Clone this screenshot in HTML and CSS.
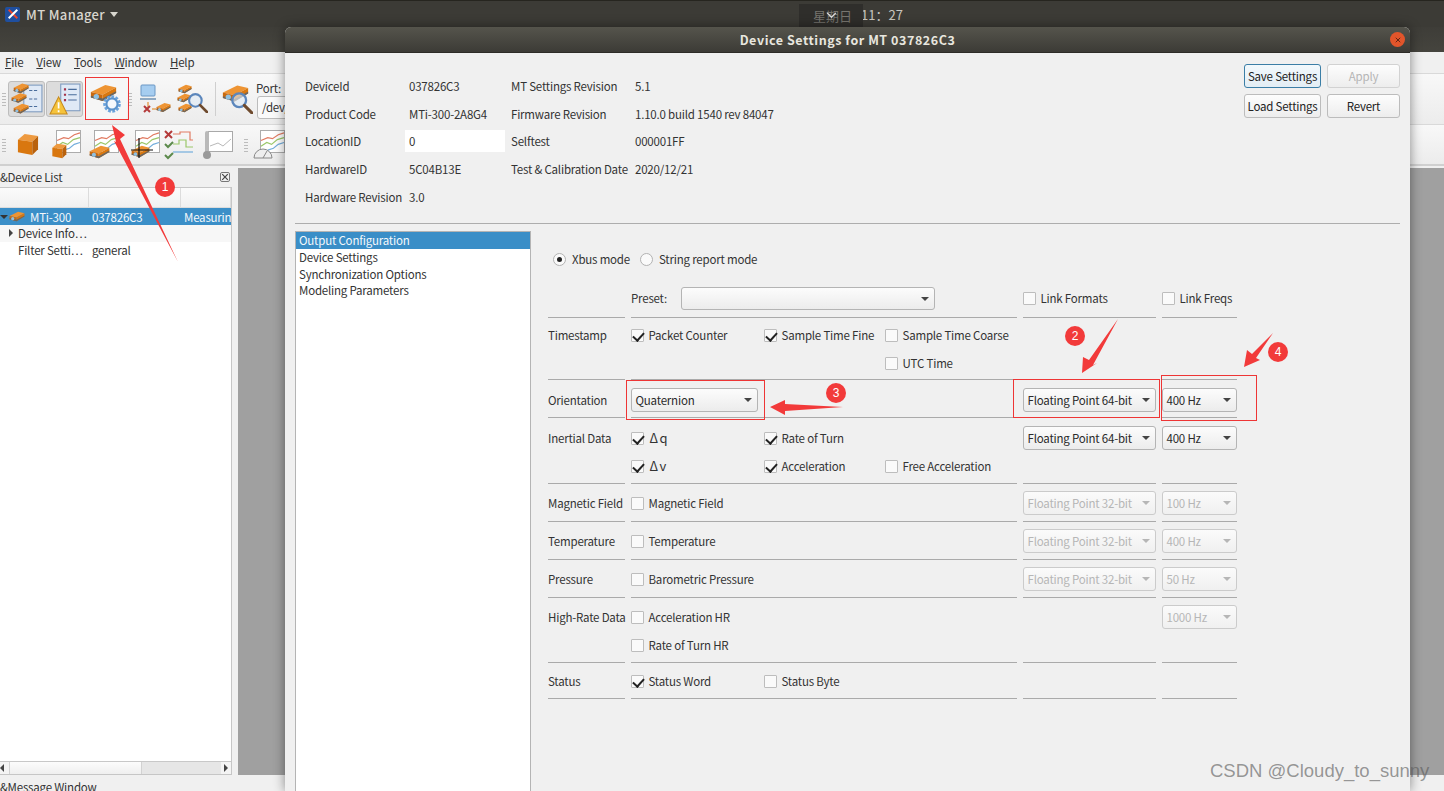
FILE: index.html
```html
<!DOCTYPE html>
<html lang="en">
<head>
<meta charset="utf-8">
<title>MT Manager</title>
<link rel="stylesheet" href="styles.css">
</head>
<body>
<svg class="defs" width="0" height="0" aria-hidden="true">
  <defs>
    <symbol id="dev" viewBox="0 0 30 20">
      <path d="M1 9 L17 1 L29 4 L14 12Z" fill="#ee9433"/>
      <path d="M1 9 L14 12 L14 19 L1 15Z" fill="#c9690f"/>
      <path d="M14 12 L29 4 L29 10 L14 19Z" fill="#d9770f"/>
      <path d="M1 13 L14 16 L29 8 L29 10 L14 19 L1 15Z" fill="#6a6660"/>
      <circle cx="7" cy="14" r="3" fill="#8fc0e0"/>
    </symbol>
    <symbol id="lens" viewBox="0 0 20 20">
      <circle cx="8" cy="8" r="6" fill="#dfeaf5" fill-opacity=".65" stroke="#5b86bc" stroke-width="2"/>
      <path d="M12.500 12.500 L19 19" stroke="#6e4a2d" stroke-width="2.600" stroke-linecap="round"/>
    </symbol>
    <symbol id="chart" viewBox="0 0 26 24">
      <rect x=".5" y=".5" width="25" height="23" fill="#fff" stroke="#a9a9a9"/>
      <path d="M1 11 L8 8 L13 9 L19 5 L25 3" fill="none" stroke="#e17b62" stroke-width="1.200"/>
      <path d="M1 17 L7 13 L12 15 L18 10 L25 8" fill="none" stroke="#9bc76a" stroke-width="1.200"/>
      <path d="M8 21 L14 19 L19 15 L25 13" fill="none" stroke="#74aedc" stroke-width="1.200"/>
    </symbol>
    <symbol id="cube" viewBox="0 0 24 24">
      <path d="M2 7 L9 1 L23 3 L17 9Z" fill="#ee9a40"/>
      <path d="M2 7 L17 9 L17 23 L2 20Z" fill="#d9770f"/>
      <path d="M17 9 L23 3 L23 17 L17 23Z" fill="#b9620d"/>
    </symbol>
  </defs>
</svg>

<div class="app">
  <header class="panel">
    <div class="appname">
      <span class="xlogo"><svg viewBox="0 0 14 14" width="12" height="12"><path d="M2 2 L12 12" stroke="#e8452e" stroke-width="2.400"/><path d="M12 2 L2 12" stroke="#fff" stroke-width="2.400"/></svg></span>
      <span>MT Manager</span>
      <span class="panel-caret"></span>
    </div>
    <div class="clock">
      <span class="clockbox">星期日<svg class="chev" viewBox="0 0 12 8" width="11" height="7"><path d="M1 1 L6 6 L11 1" fill="none" stroke="#ddd" stroke-width="1.500"/></svg></span>
      <span class="time">11：27</span>
    </div>
  </header>
  <div class="wintitle"></div>

  <nav class="menubar">
    <span><u>F</u>ile</span><span><u>V</u>iew</span><span><u>T</u>ools</span><span><u>W</u>indow</span><span><u>H</u>elp</span>
  </nav>

  <div class="toolbar tb1">
    <span class="grip"></span>
    <button class="tool on">
      <svg width="32" height="32" viewBox="0 0 30 30">
        <rect x="12" y="2" width="17" height="25" fill="#dfe9f6" stroke="#7f9cc0"/>
        <path d="M17 7h9M17 15h9M17 22h9" stroke="#4a6d9c" stroke-dasharray="3 1.500"/>
        <use href="#dev" x="2" y="0" width="15" height="10"/><use href="#dev" x="0" y="9" width="15" height="10"/><use href="#dev" x="2" y="19" width="15" height="10"/>
      </svg>
    </button>
    <button class="tool on">
      <svg width="32" height="32" viewBox="0 0 30 30">
        <rect x="11" y="1" width="18" height="25" fill="#dfe9f6" stroke="#7f9cc0"/>
        <path d="M18 6h8M18 11h8M18 16h8" stroke="#4a6d9c"/><path d="M14 6h2M14 11h2M14 16h2" stroke="#a3324a" stroke-width="2"/>
        <path d="M9 13 L17 29 L1 29Z" fill="#f5c33b" stroke="#c68a1d"/><path d="M9 18v6M9 25.500v2" stroke="#fff" stroke-width="1.600"/>
      </svg>
    </button>
    <button class="tool gear">
      <svg width="32" height="30" viewBox="0 0 32 30">
        <use href="#dev" x="0" y="0" width="27" height="18"/>
        <circle cx="22" cy="20" r="7.500" fill="none" stroke="#6ba3dc" stroke-width="2.600" stroke-dasharray="2.800 1.500"/>
        <circle cx="22" cy="20" r="5.600" fill="#f4f8fc" stroke="#5b93cc" stroke-width="2.200"/>
      </svg>
    </button>
    <span class="grip g2"></span>
    <span class="ico i4">
      <svg width="32" height="30" viewBox="0 0 32 30">
        <rect x="2" y="1" width="14" height="11" rx="1" fill="#a6cdf0" stroke="#6b97c4"/><path d="M1 14h16v2H1z" fill="#8fa9c2"/>
        <path d="M9 18v5" stroke="#e9b77f" stroke-width="2"/><path d="M5 22l6 6M11 22l-6 6" stroke="#b43a3a" stroke-width="2"/>
        <path d="M13 25h4" stroke="#e9b77f" stroke-width="2"/><use href="#dev" x="17" y="18" width="15" height="11"/>
      </svg>
    </span>
    <span class="ico i5">
      <svg width="31" height="30" viewBox="0 0 31 30">
        <use href="#dev" x="1" y="0" width="14" height="10"/><use href="#dev" x="0" y="9" width="14" height="10"/><use href="#dev" x="1" y="19" width="14" height="10"/>
        <use href="#lens" x="10" y="8" width="21" height="21"/>
      </svg>
    </span>
    <span class="sep"></span>
    <span class="ico i6">
      <svg width="31" height="30" viewBox="0 0 31 30">
        <use href="#dev" x="0" y="0" width="27" height="19"/><use href="#lens" x="8" y="7" width="23" height="23"/>
      </svg>
    </span>
    <div class="port">
      <span>Port:</span>
      <span class="portbox">/dev/ttyUSB0</span>
    </div>
  </div>

  <div class="toolbar tb2">
    <span class="grip"></span>
    <svg class="t cube1" width="23" height="23"><use href="#cube" width="23" height="23"/></svg>
    <svg class="t ch2" width="30" height="30"><use href="#chart" x="5" y="0" width="25" height="23"/><use href="#cube" x="0" y="13" width="16" height="16"/></svg>
    <svg class="t ch3" width="30" height="30"><use href="#chart" x="5" y="0" width="25" height="23"/><use href="#dev" x="0" y="15" width="21" height="14"/></svg>
    <svg class="t ch4" width="30" height="30"><use href="#chart" x="5" y="0" width="25" height="23"/><use href="#dev" x="1" y="15" width="19" height="13"/><path d="M9 8V28M1 20H23" stroke="#111" stroke-width="1.200"/></svg>
    <svg class="t ch5" width="30" height="30" viewBox="0 0 30 30">
      <path d="M9 4H16V2H26V10H29" fill="none" stroke="#e17b62" stroke-width="1.200"/><path d="M9 14H15V10H22V17H29" fill="none" stroke="#9bc76a" stroke-width="1.200"/><path d="M9 22H29" fill="none" stroke="#74aedc" stroke-width="1.200"/>
      <path d="M1 1l7 7M8 1l-7 7" stroke="#b43a3a" stroke-width="2"/><path d="M1 14l3 3 5-5M1 25l3 3 5-5" fill="none" stroke="#5c8a4c" stroke-width="2"/>
    </svg>
    <svg class="t ch6" width="30" height="30" viewBox="0 0 30 30">
      <rect x="5.500" y="1.500" width="24" height="20" fill="#fff" stroke="#a9a9a9"/><path d="M7 16l8-3 5 3 8-7" fill="none" stroke="#b8b8b8"/>
      <rect x="2" y="1" width="4" height="23" rx="2" fill="#b9b9b9"/><circle cx="4" cy="25" r="4" fill="#9a9a9a"/>
    </svg>
    <span class="grip g3"></span>
    <svg class="t ch7" width="33" height="30" viewBox="0 0 33 30">
      <use href="#chart" x="8" y="0" width="25" height="23"/><path d="M2 28a9 9 0 0 1 18 0Z" fill="#eee" stroke="#888"/><path d="M11 28l4-7" stroke="#888"/>
    </svg>
  </div>

  <div class="workspace">
    <aside class="dock">
      <div class="dockhead"><span>&amp;Device List</span><span class="dockclose"><svg viewBox="0 0 10 10" width="8" height="8"><path d="M1.500 1.500l7 7M8.500 1.500l-7 7" stroke="#444" stroke-width="1.500"/></svg></span></div>
      <div class="tree">
        <div class="treehead"><span></span><span></span><span></span></div>
        <div class="tr sel"><span class="c1"><i class="tw down"></i><svg width="16" height="13"><use href="#dev" width="16" height="13"/></svg>MTi-300</span><span class="c2">037826C3</span><span class="c3">Measuring</span></div>
        <div class="tr alt"><span class="c1 sub"><i class="tw"></i>Device Info…</span><span class="c2"></span></div>
        <div class="tr"><span class="c1 sub">Filter Setti…</span><span class="c2">general</span></div>
        <div class="fill"></div>
        <div class="hscroll"><span class="sa l"></span><span class="thumb"></span><span class="rest"></span><span class="sa r"></span></div>
      </div>
      <div class="msg">&amp;Message Window</div>
    </aside>
    <main class="mdi"></main>
  </div>
</div>

<section class="dialog">
  <div class="dtitle">
    <span>Device Settings for MT 037826C3</span>
    <span class="dclose"><svg viewBox="0 0 8 8" width="6" height="6"><path d="M1 1l6 6M7 1l-6 6" stroke="#5c2412" stroke-width="1.300"/></svg></span>
  </div>
  <div class="dbody">
    <div class="dtop">
      <div class="info">
        <span>DeviceId</span><span>037826C3</span><span>MT Settings Revision</span><span>5.1</span>
        <span>Product Code</span><span>MTi-300-2A8G4</span><span>Firmware Revision</span><span>1.10.0 build 1540 rev 84047</span>
        <span>LocationID</span><span class="inp">0</span><span>Selftest</span><span>000001FF</span>
        <span>HardwareID</span><span>5C04B13E</span><span>Test &amp; Calibration Date</span><span>2020/12/21</span>
        <span>Hardware Revision</span><span>3.0</span><span></span><span></span>
      </div>
      <div class="btns">
        <button class="btn focus">Save Settings</button><button class="btn off">Apply</button>
        <button class="btn">Load Settings</button><button class="btn">Revert</button>
      </div>
    </div>
    <div class="hr"></div>
    <div class="dmain">
      <div class="pages">
        <div class="page cur">Output Configuration</div>
        <div class="page">Device Settings</div>
        <div class="page">Synchronization Options</div>
        <div class="page">Modeling Parameters</div>
      </div>
      <div class="config">
        <div class="modes">
          <span class="radio on"></span><span class="mtext">Xbus mode</span>
          <span class="radio"></span><span>String report mode</span>
        </div>

        <div class="row preset">
          <div class="cell"></div>
          <div class="cell presetcell"><span class="plabel">Preset:</span><span class="combo pcombo"></span></div>
          <div class="cell"><div class="line"><span class="ck"></span>Link Formats</div></div>
          <div class="cell"><div class="line"><span class="ck"></span>Link Freqs</div></div>
        </div>

        <div class="row ts">
          <div class="cell"><div class="line">Timestamp</div></div>
          <div class="cell checks">
            <div class="line"><span class="ck y"></span>Packet Counter</div>
            <div class="line"><span class="ck y"></span>Sample Time Fine</div>
            <div class="line"><span class="ck"></span>Sample Time Coarse</div>
            <div class="line c3col"><span class="ck"></span>UTC Time</div>
          </div>
          <div class="cell"></div><div class="cell"></div>
        </div>

        <div class="row or">
          <div class="cell"><div class="line">Orientation</div></div>
          <div class="cell"><div class="line"><span class="combo quat">Quaternion</span></div></div>
          <div class="cell"><div class="line"><span class="combo">Floating Point 64-bit</span></div></div>
          <div class="cell"><div class="line"><span class="combo">400 Hz</span></div></div>
        </div>

        <div class="row in">
          <div class="cell"><div class="line">Inertial Data</div></div>
          <div class="cell checks">
            <div class="line"><span class="ck y"></span><span class="delta">Δq</span></div>
            <div class="line"><span class="ck y"></span>Rate of Turn</div>
            <div class="line"></div>
            <div class="line"><span class="ck y"></span><span class="delta">Δv</span></div>
            <div class="line"><span class="ck y"></span>Acceleration</div>
            <div class="line"><span class="ck"></span>Free Acceleration</div>
          </div>
          <div class="cell"><div class="line"><span class="combo">Floating Point 64-bit</span></div></div>
          <div class="cell"><div class="line"><span class="combo">400 Hz</span></div></div>
        </div>

        <div class="row mg">
          <div class="cell"><div class="line">Magnetic Field</div></div>
          <div class="cell"><div class="line"><span class="ck"></span>Magnetic Field</div></div>
          <div class="cell"><div class="line"><span class="combo dis">Floating Point 32-bit</span></div></div>
          <div class="cell"><div class="line"><span class="combo dis">100 Hz</span></div></div>
        </div>

        <div class="row mg">
          <div class="cell"><div class="line">Temperature</div></div>
          <div class="cell"><div class="line"><span class="ck"></span>Temperature</div></div>
          <div class="cell"><div class="line"><span class="combo dis">Floating Point 32-bit</span></div></div>
          <div class="cell"><div class="line"><span class="combo dis">400 Hz</span></div></div>
        </div>

        <div class="row mg">
          <div class="cell"><div class="line">Pressure</div></div>
          <div class="cell"><div class="line"><span class="ck"></span>Barometric Pressure</div></div>
          <div class="cell"><div class="line"><span class="combo dis">Floating Point 32-bit</span></div></div>
          <div class="cell"><div class="line"><span class="combo dis">50 Hz</span></div></div>
        </div>

        <div class="row hr-data">
          <div class="cell"><div class="line">High-Rate Data</div></div>
          <div class="cell">
            <div class="line"><span class="ck"></span>Acceleration HR</div>
            <div class="line"><span class="ck"></span>Rate of Turn HR</div>
          </div>
          <div class="cell"></div>
          <div class="cell"><div class="line"><span class="combo dis">1000 Hz</span></div></div>
        </div>

        <div class="row st">
          <div class="cell"><div class="line">Status</div></div>
          <div class="cell checks">
            <div class="line"><span class="ck y"></span>Status Word</div>
            <div class="line"><span class="ck"></span>Status Byte</div>
          </div>
          <div class="cell"></div><div class="cell"></div>
        </div>
      </div>
    </div>
  </div>
</section>

<svg class="marks" width="1444" height="791" viewBox="0 0 1444 791">
  <g fill="#f23a3a">
    <path d="M112 125 L125 135 L120 139 L178 262 L114 141 L116 142Z"/>
    <path d="M1082 373 L1083 357 L1089 360 L1118 319 L1093 365 L1097 363Z"/>
    <path d="M1244 367 L1247 350 L1252 354 L1273 333 L1256 358 L1260 360Z"/>
    <path d="M770 407 L785 400 L785 404 L843 407 L785 411 L785 415Z"/>
    <circle cx="165" cy="187" r="10"/>
    <circle cx="1075" cy="336" r="10"/>
    <circle cx="836" cy="393" r="10"/>
    <circle cx="1278" cy="352" r="10"/>
  </g>
  <g class="marknum" fill="#fff" text-anchor="middle">
    <text x="165" y="191">1</text>
    <text x="1075" y="340">2</text>
    <text x="836" y="397">3</text>
    <text x="1278" y="356">4</text>
  </g>
</svg>
<div class="box b1"></div>
<div class="box b2"></div>
<div class="box b3"></div>
<div class="box b4"></div>
<div class="wm">CSDN @Cloudy_to_sunny</div>
</body>
</html>
```

FILE: styles.css
```css
* { box-sizing: border-box; }
html, body { margin: 0; height: 100%; overflow: hidden; }
body {
  font-family: "Noto Sans CJK SC", "Noto Sans", sans-serif;
  font-size: 11.500px;
  letter-spacing: -.2px;
  color: #333;
  background: #f0f0f0;
  position: relative;
}
.defs { position: absolute; }
.app { display: flex; flex-direction: column; height: 791px; }

.panel {
  height: 27px;
  background: #3c3b36;
  border-top: 1px solid #26251f;
  display: flex;
  align-items: center;
  color: #d8d6ce;
  position: relative;
  flex: none;
}
.appname { display: flex; align-items: center; gap: 6px; padding-left: 5px; font-size: 13px; font-weight: 500; letter-spacing: .35px; }
.xlogo { width: 15px; height: 15px; background: #1f4f9f; display: flex; align-items: center; justify-content: center; border-radius: 2px; }
.panel-caret { width: 0; height: 0; border: 4px solid transparent; border-top: 5px solid #d8d6ce; border-bottom: 0; margin-left: -1px; }
.clock { margin-left: 681px; display: flex; align-items: center; height: 100%; }
.clockbox {
  position: relative;
  width: 64px; height: 24px; background: #2f2e2b; color: #77756f;
  display: flex; align-items: center; padding-left: 14px; font-size: 13px;
  letter-spacing: 0; margin-top: 3px;
}
.chev { position: absolute; left: 27px; top: 8px; }
.time { font-size: 13px; color: #c9c7c0; margin-left: -2px; letter-spacing: 0; }
.wintitle { height: 25px; flex: none; background: linear-gradient(#3e3d38, #45443e); }

.menubar { height: 21px; flex: none; display: flex; align-items: center; gap: 13px; padding-left: 5px; padding-bottom: 1px; background: #f0f0f0; color: #333; }
.toolbar { flex: none; display: flex; align-items: center; background: linear-gradient(#f8f8f8, #ececec); border-top: 1px solid #d9d9d9; position: relative; }
.tb1 { height: 51px; }
.tb2 { height: 42px; border-bottom: 2px solid #d0d0d0; }
.grip { width: 4px; height: 14px; margin-left: 2px; background-image: radial-gradient(#bcbcbc 40%, transparent 45%); background-size: 2px 3px; }
.tool { width: 37px; height: 36px; border: 0; padding: 0; background: none; display: flex; align-items: center; justify-content: center; border-radius: 3px; margin-left: 1px; }
.tool.on { background: #dcdcdc; border: 1px solid #bdbdbd; }
.tool.on:first-of-type { margin-left: 2px; }
.tool.gear { width: 43px; height: 42px; margin-left: 1px; background: #f6f6f6; }
.g2 { margin-left: 1px; }
.ico { display: flex; }
.i4 { margin-left: 7px; }
.i5 { margin-left: 6px; }
.sep { width: 1px; height: 34px; background: #cfcfcf; margin: 0 6px 0 7px; }
.port { display: flex; flex-direction: column; gap: 0; margin-left: 3px; padding-top: 1px; width: 200px; }
.portbox { height: 23px; width: 200px; margin-left: 1px; border: 1px solid #bcbcbc; border-radius: 3px; background: #fafafa; padding: 2px 4px; white-space: nowrap; overflow: hidden; }
.t { flex: none; }
.cube1 { margin-left: 10px; }
.ch2 { margin-left: 12px; }
.ch3 { margin-left: 8px; }
.ch4 { margin-left: 11px; }
.ch5 { margin-left: 4px; }
.ch6 { margin-left: 9px; }
.g3 { margin-left: 11px; }
.ch7 { margin-left: 4px; }

.workspace { flex: 1; display: flex; min-height: 0; }
.dock { width: 232px; flex: none; display: flex; flex-direction: column; }
.dockhead { height: 21px; display: flex; align-items: center; justify-content: space-between; padding-right: 2px; flex: none; }
.dockclose { width: 10px; height: 10px; border: 1px solid #777; border-radius: 2px; display: flex; align-items: center; justify-content: center; }
.tree { flex: 1; display: flex; flex-direction: column; background: #fff; border: 1px solid #c6c6c6; border-left: 0; min-height: 0; }
.treehead { height: 20px; flex: none; display: grid; grid-template-columns: 89px 92px 1fr; background: linear-gradient(#fbfbfb, #f0f0f0); }
.treehead span { border-right: 1px solid #dcdcdc; border-bottom: 1px solid #dcdcdc; }
.tr { height: 16.500px; flex: none; display: grid; grid-template-columns: 89px 92px 1fr; align-items: center; line-height: 16px; white-space: nowrap; overflow: hidden; }
.tr.sel { background: #3b8fc8; color: #f4f8fb; height: 17px; }
.tr.alt { background: #f7f7f7; }
.c1 { display: flex; align-items: center; gap: 5px; overflow: hidden; }
.sel .c1 { padding-left: 9px; position: relative; }
.sub { padding-left: 18px; position: relative; }
.c2 { padding-left: 3px; }
.c3 { padding-left: 3px; overflow: hidden; }
.tw { position: absolute; left: 9px; top: 4px; width: 0; height: 0; border: 4px solid transparent; border-left: 4px solid #444; border-right: 0; }
.tw.down { left: 0; top: 6px; border: 4px solid transparent; border-top: 4px solid #333; border-bottom: 0; }
.fill { flex: 1; }
.hscroll { height: 13px; flex: none; display: flex; border-top: 1px solid #c8c8c8; background: #e6e6e6; }
.sa { width: 9px; position: relative; background: #f4f4f4; flex: none; }
.sa::after { content: ""; position: absolute; top: 2px; width: 0; height: 0; border: 4px solid transparent; }
.sa.l::after { left: 0; border-right: 4px solid #444; border-left: 0; }
.sa.r { width: 10px; }
.sa.r::after { left: 3px; border-left: 4px solid #444; border-right: 0; }
.thumb { width: 133px; background: linear-gradient(#fcfcfc, #efefef); border: 1px solid #d2d2d2; border-width: 0 1px; }
.rest { flex: 1; }
.msg { height: 16px; flex: none; line-height: 24px; overflow: hidden; }
.mdi { flex: 1; background: #a0a0a0; margin: 2px 0 16px 6px; }

.dialog {
  position: absolute;
  left: 285px; top: 27px;
  width: 1125px; height: 764px;
  display: flex; flex-direction: column;
  background: #f0f0f0;
  border-radius: 6px 6px 0 0;
  box-shadow: 0 0 12px rgba(0,0,0,.45);
  overflow: hidden;
}
.dtitle {
  height: 26px; flex: none; background: linear-gradient(#55544c, #3c3b36);
  border-bottom: 1px solid #2d2c28;
  color: #e8e6df; font-weight: 700; font-size: 12.500px; letter-spacing: .55px;
  display: flex; align-items: center; justify-content: center; position: relative;
}
.dclose { position: absolute; right: 5px; top: 5px; width: 15px; height: 15px; border-radius: 50%; background: #e2552b; display: flex; align-items: center; justify-content: center; }
.dbody { flex: 1; display: flex; flex-direction: column; min-height: 0; padding: 0 10px; }
.dtop { display: flex; justify-content: space-between; height: 170px; flex: none; padding-top: 10px; }
.info { display: grid; grid-template-columns: 104px 102px 124px 1fr; grid-auto-rows: 27.700px; padding: 9px 0 0 10px; align-items: center; line-height: 22px; white-space: nowrap; }
.inp { background: #fff; margin-left: -4px; padding-left: 4px; width: 100px; height: 22px; }
.btns { display: grid; grid-template-columns: 77px 73px; grid-auto-rows: 24px; column-gap: 6px; row-gap: 6px; align-content: start; margin-top: 1px; }
.btn {
  font: inherit; letter-spacing: inherit; color: #222; padding: 0; white-space: nowrap;
  border: 1px solid #bcbcbc; border-radius: 3px; background: linear-gradient(#fdfdfd, #ededed);
}
.btn.focus { border-color: #3b7ea6; background: linear-gradient(#f2f8fc, #e3edf4); }
.btn.off { color: #b5b5b5; border-color: #d2d2d2; }
.hr { height: 1px; background: #adadad; flex: none; }
.dmain { flex: 1; display: flex; min-height: 0; padding-top: 7px; }
.pages { width: 236px; flex: none; background: #fff; border: 1px solid #b4b4b4; border-bottom: 0; line-height: 16.500px; color: #333; }
.page { height: 16.500px; padding-left: 3px; white-space: nowrap; }
.page.cur { background: #3a8ec7; color: #f4f8fb; height: 17px; }
.config { flex: 1; padding-left: 17px; }
.modes { display: flex; align-items: center; height: 16px; margin-top: 20px; margin-bottom: 16px; padding-left: 5px; }
.radio { width: 13px; height: 13px; border: 1px solid #b2b2b2; border-radius: 50%; background: #fafafa; margin-right: 6px; position: relative; flex: none; }
.radio.on::after { content: ""; position: absolute; left: 3px; top: 3px; width: 5px; height: 5px; border-radius: 50%; background: #222; }
.mtext { margin-right: 10px; }

.row { display: grid; grid-template-columns: 77px 386px 133px 75px; column-gap: 6px; white-space: nowrap; }
.cell { border-bottom: 1px solid #aaa; }
.line { display: flex; align-items: center; height: 28px; padding-bottom: 1px; }
.preset { height: 35px; }
.preset .cell { padding-top: 1px; }
.preset .presetcell { display: flex; align-items: center; padding: 0 0 5px; }
.plabel { width: 50px; flex: none; }
.ts { height: 62px; }
.ts .cell { padding-top: 4px; }
.ts .line { height: 27.500px; }
.or { height: 38px; }
.or .cell { padding-top: 6px; }
.in { height: 66px; }
.in .cell { padding-top: 6px; }
.mg { height: 38px; }
.mg .cell { padding-top: 5px; }
.hr-data { height: 65px; }
.hr-data .cell { padding-top: 5px; }
.st { height: 36px; }
.st .cell { padding-top: 4px; }
.checks { display: grid; grid-template-columns: 133px 121px 1fr; align-content: start; }
.c3col { grid-column: 3; }
.ck { width: 13px; height: 13px; flex: none; border: 1px solid #bdbdbd; border-radius: 1px; background: #fafafa; margin-right: 4.500px; position: relative; top: .5px; }
.ck.y::after { content: ""; position: absolute; left: 3px; top: 0; width: 5px; height: 9px; border: solid #222; border-width: 0 2px 2px 0; transform: rotate(42deg); }
.delta { letter-spacing: 1.500px; margin-left: 1px; font-size: 13px; }
.combo {
  position: relative; display: flex; align-items: center; width: 100%; height: 24px; padding-left: 3.500px; top: .5px;
  border: 1px solid #b4b4b4; border-radius: 3px; background: linear-gradient(#fcfcfc, #ececec); color: #2a2a2a;
}
.combo::after { content: ""; position: absolute; right: 5.500px; top: 9px; width: 0; height: 0; border: 4px solid transparent; border-top: 4px solid #444; border-bottom: 0; }
.combo.dis { color: #b6b6b6; border-color: #cbcbcb; background: linear-gradient(#fbfbfb, #f0f0f0); }
.combo.dis::after { border-top-color: #b6b6b6; }
.quat { width: 127px; }
.pcombo { width: 254px; height: 23px; }

.marks { position: absolute; left: 0; top: 0; pointer-events: none; }
.marknum { font-family: "Liberation Sans", sans-serif; font-size: 12px; letter-spacing: 0; }
.box { position: absolute; border: 1px solid #ee3535; pointer-events: none; }
.b1 { left: 85px; top: 77px; width: 44px; height: 43px; }
.b2 { left: 626px; top: 380px; width: 139px; height: 40px; }
.b3 { left: 1013px; top: 379px; width: 147px; height: 39px; }
.b4 { left: 1161px; top: 375px; width: 96px; height: 46px; }
.wm { position: absolute; left: 1210px; top: 760px; font-family: "Liberation Sans", sans-serif; font-size: 18.500px; letter-spacing: 0; line-height: 22px; color: rgba(90,90,90,.62); white-space: nowrap; }
```
